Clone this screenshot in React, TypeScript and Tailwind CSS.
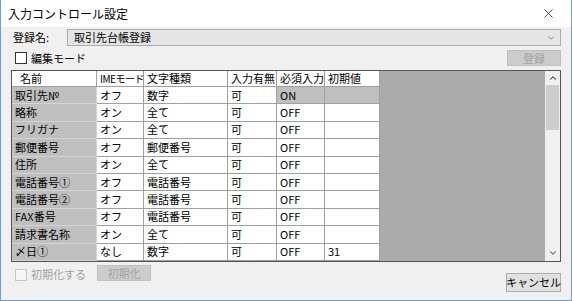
import { X, ChevronDown, ChevronUp } from "lucide-react";

const rows = [
  { name: "取引先№", ime: "オフ", kind: "数字", input: "可", req: "ON", init: "", sel: true },
  { name: "略称", ime: "オン", kind: "全て", input: "可", req: "OFF", init: "" },
  { name: "フリガナ", ime: "オン", kind: "全て", input: "可", req: "OFF", init: "" },
  { name: "郵便番号", ime: "オフ", kind: "郵便番号", input: "可", req: "OFF", init: "" },
  { name: "住所", ime: "オン", kind: "全て", input: "可", req: "OFF", init: "" },
  { name: "電話番号①", ime: "オフ", kind: "電話番号", input: "可", req: "OFF", init: "" },
  { name: "電話番号②", ime: "オフ", kind: "電話番号", input: "可", req: "OFF", init: "" },
  { name: "FAX番号", ime: "オフ", kind: "電話番号", input: "可", req: "OFF", init: "" },
  { name: "請求書名称", ime: "オン", kind: "全て", input: "可", req: "OFF", init: "" },
  { name: "〆日①", ime: "なし", kind: "数字", input: "可", req: "OFF", init: "31" },
];

const cell = "border-r border-b border-[#a0a0a0] px-[3px] flex items-center whitespace-nowrap overflow-hidden";

export default function App() {
  return (
    <div
      className="w-[572px] h-[301px] bg-[#f0f0f0] border-x border-b border-[#6d9fd2] flex flex-col text-[11px] text-black leading-none"
      style={{ fontFamily: '"Noto Sans CJK JP", "Noto Sans", sans-serif' }}
    >
      {/* title bar */}
      <div className="h-[27px] bg-white flex items-center justify-between pl-[7px] pr-[15px] shrink-0 text-[12px]">
        <span>入力コントロール設定</span>
        <X size={15} strokeWidth={1.1} />
      </div>

      <div className="flex-1 flex flex-col px-[10px]">
        {/* name row */}
        <div className="flex items-center mt-[2px] h-[17px]">
          <span className="w-[56px] pl-[2px]">登録名:</span>
          <div className="flex-1 h-[17px] bg-[#e5e5e5] border border-[#acacac] flex items-center justify-between pl-[6px] pr-[4px]">
            <span>取引先台帳登録</span>
            <ChevronDown size={10} strokeWidth={1.5} className="text-[#555]" />
          </div>
        </div>

        {/* edit mode row */}
        <div className="flex items-center justify-between mt-[4px] h-[16px]">
          <label className="flex items-center gap-[4px] pl-[4px]">
            <span className="w-[12px] h-[12px] border border-[#333] bg-white" />
            <span>編集モード</span>
          </label>
          <div className="w-[54px] h-[16px] bg-[#cccccc] border border-[#bfbfbf] text-[#a3a3a3] flex items-center justify-center">
            登録
          </div>
        </div>

        {/* grid */}
        <div className="mt-[4px] h-[192px] border border-[#555] flex">
          <div className="grid grid-cols-[85px_47px_84px_49px_48px_55px] grid-rows-[16px_repeat(10,17.4px)] bg-white content-start">
            {["名前", "IMEモード", "文字種類", "入力有無", "必須入力", "初期値"].map((h, i) => (
              <div
                key={h}
                className={`${cell} ${i === 0 ? "pl-[8px]" : ""} ${i === 1 ? "px-[2px] text-[10px] tracking-[-0.5px]" : ""}`}
              >
                {h}
              </div>
            ))}
            {rows.map((r) => (
              <div key={r.name} className="contents">
                <div className={`${cell} bg-[#bfbfbf] border-[#d4d4d4]`}>{r.name}</div>
                <div className={cell}>{r.ime}</div>
                <div className={cell}>{r.kind}</div>
                <div className={cell}>{r.input}</div>
                <div className={`${cell} ${r.sel ? "bg-[#bfbfbf]" : ""}`}>{r.req}</div>
                <div className={`${cell} ${r.sel ? "bg-[#bfbfbf]" : ""}`}>{r.init}</div>
              </div>
            ))}
          </div>
          <div className="flex-1 bg-[#ababab]" />
          <div className="w-[15px] bg-[#f0f0f0] flex flex-col items-center">
            <div className="h-[14px] flex items-center">
              <ChevronUp size={10} strokeWidth={2.5} className="text-[#333]" />
            </div>
            <div className="w-[13px] h-[45px] bg-[#cdcdcd]" />
            <div className="flex-1" />
            <div className="h-[16px] flex items-center">
              <ChevronDown size={10} strokeWidth={2.5} className="text-[#555]" />
            </div>
          </div>
        </div>

        {/* bottom row */}
        <div className="flex items-start justify-between mt-[3px]">
          <div className="flex items-center">
            <label className="flex items-center gap-[4px] pl-[4px] mt-[3px]">
              <span className="w-[12px] h-[12px] border border-[#c4c4c4] bg-[#f7f7f7]" />
              <span className="text-[#a0a0a0]">初期化する</span>
            </label>
            <div className="ml-[11px] w-[54px] h-[16px] bg-[#cccccc] border border-[#bfbfbf] text-[#a3a3a3] flex items-center justify-center">
              初期化
            </div>
          </div>
          <div className="mt-[8px] w-[55px] h-[19px] bg-[#e1e1e1] border border-[#adadad] flex items-center justify-center whitespace-nowrap">
            キャンセル
          </div>
        </div>
      </div>
    </div>
  );
}
